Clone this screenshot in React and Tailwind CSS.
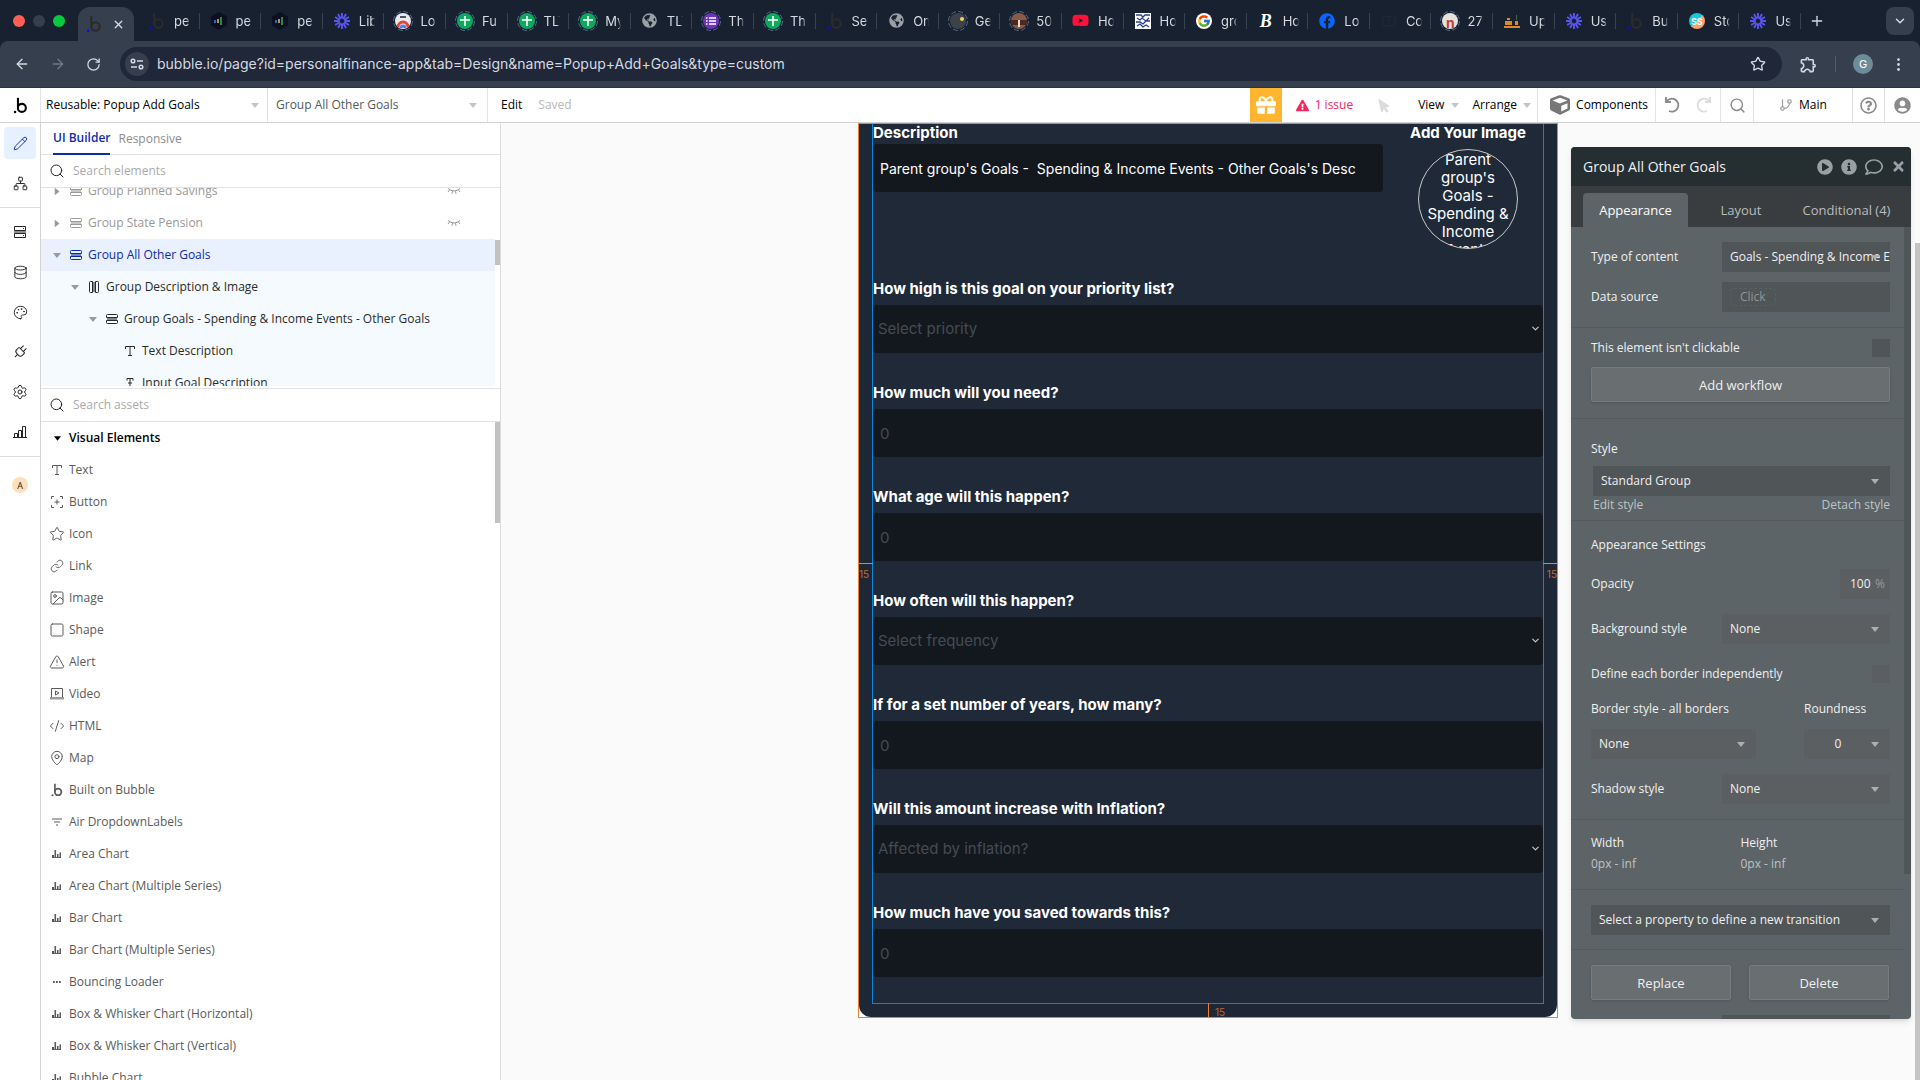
import {
  ArrowLeft, ArrowRight, RotateCw, Star, MoreVertical, Plus, X, ChevronDown, Search, Pencil,
  Network, Database, Palette, Plug, Settings, Image, Square, TriangleAlert, CodeXml, MapPin,
  Link, GitBranch,
} from 'lucide-react'
import {
  FaGift, FaExclamationTriangle, FaMousePointer, FaCube, FaPlayCircle, FaInfoCircle, FaRegComment,
  FaTimes, FaYoutube, FaFacebook, FaGlobeAmericas, FaRegQuestionCircle, FaUserCircle,
} from 'react-icons/fa'
import { MdOutlineExtension } from 'react-icons/md'
import { FcGoogle } from 'react-icons/fc'
import { clsx } from 'clsx'

/* ---------- icons ---------- */

function BubbleLogo({ className, dot = 'currentColor' }) {
  return (
    <svg viewBox="0 0 16 20" className={className} fill="none">
      <path d="M5 1v11" stroke="currentColor" strokeWidth="2.4" />
      <circle cx="9.6" cy="12.8" r="4.7" stroke="currentColor" strokeWidth="2.4" />
      <circle cx="1.6" cy="17.6" r="1.5" fill={dot} />
    </svg>
  )
}

function Burst() {
  return (
    <svg viewBox="0 0 20 20" className="size-4 text-[#5b55f0]" stroke="currentColor" strokeWidth="2.4">
      {[0, 30, 60, 90, 120, 150].map((a) => (
        <path key={a} d="M10 0v7M10 13v7" transform={`rotate(${a} 10 10)`} />
      ))}
    </svg>
  )
}

function GroupIcon({ vertical, className }) {
  return (
    <svg viewBox="0 0 12 12" className={clsx('size-3 shrink-0', vertical && 'rotate-90', className)} fill="none">
      <path d="M.5 4.5v-2a1 1 0 0 1 1-1h9a1 1 0 0 1 1 1v2zM.5 7.5v2a1 1 0 0 0 1 1h9a1 1 0 0 0 1-1v-2z" stroke="currentColor" />
      <path d="M1 5h10v2.5H1z" fill="currentColor" opacity=".55" />
    </svg>
  )
}

function ClosedEye() {
  return (
    <svg viewBox="0 0 14 8" className="h-2 w-3.5" fill="none" stroke="currentColor">
      <path d="M1 1.5q6 5 12 0M2.5 3 1 5M5.5 4.2 5 6.8M8.5 4.2 9 6.8M11.5 3 13 5" />
    </svg>
  )
}

function Bars() {
  return (
    <svg viewBox="0 0 14 14" className="size-3.5" fill="none" stroke="currentColor">
      <path d="M0 12.5h14M1.5 12V8.5h3V12M5.5 12V5.5h3V12M9.5 12V1.5h3V12" />
    </svg>
  )
}

function ChartIcon() {
  return (
    <svg viewBox="0 0 10 8" className="h-2 w-2.5" fill="currentColor">
      <path d="M0 5h2v3H0zM2.5 0h1.6v8H2.5zM5 4h1.5v4H5zM7.5 2.5H9V8H7.5z" />
      <path d="M0 7h9v1H0z" />
    </svg>
  )
}

function ButtonIcon() {
  return (
    <svg viewBox="0 0 14 14" className="size-3.5" fill="none" stroke="currentColor">
      <path d="M1.5 4V1.5H4M10 1.5h2.5V4M12.5 10v2.5H10M4 12.5H1.5V10M7 4.5v5M4.5 7h5" />
    </svg>
  )
}

function VideoIcon() {
  return (
    <svg viewBox="0 0 14 14" className="size-3.5" fill="none" stroke="currentColor">
      <path d="M1.5 10V1.5h11V10M5.5 4v4l3.5-2z" />
      <path d="M0 10h14v2.500H0z" fill="currentColor" stroke="none" opacity=".6" />
    </svg>
  )
}

function FilterIcon() {
  return (
    <svg viewBox="0 0 12 8" className="h-2 w-3" stroke="currentColor" strokeWidth="1.2">
      <path d="M1 1h10M3 4h6M5 7h2" />
    </svg>
  )
}

function DotsIcon() {
  return (
    <svg viewBox="0 0 8 2" className="h-0.5 w-2" fill="currentColor">
      <path d="M0 0h1.8v2H0zM3 0h1.8v2H3zM6 0h1.8v2H6z" />
    </svg>
  )
}

function TextIcon({ input }) {
  return (
    <svg viewBox="0 0 12 12" className="size-3 shrink-0" fill="none" stroke="currentColor">
      <path d={input ? 'M3 3.5V1.5h6v2M6 1.5v9M4.5 10.5h3M4 6h4' : 'M1.5 4V1.5h9V4M6 1.5v9M4 10.5h4'} />
    </svg>
  )
}

function ServerIcon() {
  return (
    <svg viewBox="0 0 14 14" className="size-3.5" fill="none" stroke="currentColor">
      <path d="M1.5 1.5h11v4h-11zM1.5 8.5h11v4h-11zM10 3.5h1M10 10.5h1" />
      <path d="M1 5.5h12v3H1z" fill="currentColor" stroke="none" opacity=".5" />
    </svg>
  )
}

function Caret({ className }) {
  return (
    <svg viewBox="0 0 8 5" className={clsx('pointer-events-none h-[5px] w-2', className)} fill="currentColor">
      <path d="M0 0h8L4 5z" />
    </svg>
  )
}

/* ---------- browser ---------- */

function Ringed({ className, children }) {
  return (
    <span className="relative grid size-[22px] shrink-0 place-items-center">
      <svg viewBox="0 0 22 22" className="absolute inset-0 size-full" fill="none">
        <circle cx="11" cy="11" r="9.5" stroke="#4d6a98" strokeDasharray="5 2.46" />
      </svg>
      <span className={clsx('grid size-4 place-items-center overflow-hidden rounded-full', className)}>{children}</span>
    </span>
  )
}

const Dim = () => <BubbleLogo className="h-[18px] w-4 text-[#2b2b2e]" dot="#0a0af0" />
const Globe = () => <FaGlobeAmericas size={15} className="text-[#9aa0a6]" />
const Sheet = () => (
  <Ringed className="bg-[#10a861]">
    <svg viewBox="0 0 10 10" className="size-2.5" stroke="#fff" strokeWidth="1.6"><path d="M5 0v10M0 4h10" /></svg>
  </Ringed>
)
const Spectrum = () => (
  <svg viewBox="0 0 18 18" className="size-[18px]">
    <path d="M9 0l8 4.500v9L9 18l-8-4.500v-9z" fill="#0d1020" />
    <path d="M5 8v3" stroke="#3b82f6" strokeWidth="1.500" />
    <path d="M8 7v4" stroke="#f4c542" strokeWidth="1.500" />
    <path d="M11 5v8" stroke="#3fa66b" strokeWidth="1.500" />
  </svg>
)

const browserTabs = [
  { text: 'pers', icon: <Dim /> },
  { text: 'pers', icon: <Spectrum /> },
  { text: 'pers', icon: <Spectrum /> },
  { text: 'Libr', icon: <Burst /> },
  {
    text: 'Loo',
    icon: (
      <Ringed className="bg-[#e8eaed]">
        <svg viewBox="0 0 16 16" className="size-4" fill="none" strokeWidth="3">
          <path d="M5 4h6" stroke="#4b5563" strokeWidth="2" />
          <path d="M3 14a5 5 0 0 1 10 0" stroke="#ea4335" />
          <path d="M6 15a2 2 0 0 1 4 0" stroke="#4285f4" />
        </svg>
      </Ringed>
    ),
  },
  { text: 'Full', icon: <Sheet /> },
  { text: 'TLT', icon: <Sheet /> },
  { text: 'My ', icon: <Sheet /> },
  { text: 'TLT', icon: <Globe /> },
  {
    text: 'The',
    icon: (
      <Ringed className="bg-[#6d35b5]">
        <svg viewBox="0 0 10 10" className="size-2.5" stroke="#fff" strokeWidth="1.500"><path d="M0 2h1.500M3 2h7M0 5h1.500M3 5h7M0 8h1.500M3 8h7" /></svg>
      </Ringed>
    ),
  },
  { text: 'The', icon: <Sheet /> },
  { text: 'Set', icon: <Dim /> },
  { text: 'Onl', icon: <Globe /> },
  {
    text: 'Get',
    icon: (
      <Ringed className="bg-[#3d4248]">
        <span className="mb-1 ml-2 size-1 rounded-full bg-[#f4d35e]" />
      </Ringed>
    ),
  },
  {
    text: '50 ',
    icon: (
      <Ringed className="bg-[#8a5a45]">
        <svg viewBox="0 0 16 16" className="size-4"><path d="M0 7h16v5H0z" fill="#4a2a20" /><path d="M7 7h2v7H7z" fill="#e8dfd6" /></svg>
      </Ringed>
    ),
  },
  { text: 'How', icon: <FaYoutube size={17} className="text-[#ff0f3a]" /> },
  {
    text: 'Hov',
    icon: (
      <svg viewBox="0 0 16 16" className="size-4">
        <path d="M0 0h16v16H0z" fill="#fff" />
        <path d="M1 2h5l2 2 2-2h5M2 5l3 2 2-2 4 3 3-3M1 9h4l3 2 3-3h4M2 13l3-2 3 3 3-2 3 2" fill="none" stroke="#27408b" strokeWidth="1.300" />
      </svg>
    ),
  },
  {
    text: 'gro',
    icon: <span className="grid size-4 place-items-center rounded-full bg-white"><FcGoogle size={14} /></span>,
  },
  { text: 'Hov', icon: <span className="font-['Liberation_Serif',serif] text-lg leading-4 font-bold text-white italic">B</span> },
  { text: 'Log', icon: <FaFacebook size={16} className="text-[#0866ff]" /> },
  {
    text: 'Cou',
    icon: (
      <svg viewBox="0 0 16 16" className="size-3.5" fill="none" stroke="#222e39">
        <path d="M1 2l7 1 7-1v11l-7 1-7-1zM8 3v11" />
      </svg>
    ),
  },
  { text: '27 ', icon: <Ringed className="bg-[#e6e2d8] text-sm font-bold text-[#c2403a]">n</Ringed> },
  {
    text: 'Upg',
    icon: (
      <svg viewBox="0 0 16 16" className="size-4" fill="#d98a2b">
        <path d="M0 13h16v2H0zM1 8h7v4H1zM3 5h3v2H3zM11 8h3v4h-3z" />
        <path d="M12 2h1v5h-1z" fill="#3f6b3a" />
      </svg>
    ),
  },
  { text: 'Use', icon: <Burst /> },
  { text: 'Bub', icon: <Dim /> },
  {
    text: 'Sto',
    icon: <span className="grid size-4 place-items-center rounded-full bg-linear-135 from-[#18c5d9] from-50% to-[#f7a072] to-50% text-[9px] font-bold text-white">SS</span>,
  },
  { text: 'Use', icon: <Burst /> },
]

function BrowserChrome() {
  return (
    <header className="bg-[#17212f] font-['Inter',sans-serif] text-[#d5dae1]">
      <div className="flex h-[41px] items-end">
        <div className="flex w-[78px] shrink-0 gap-2 self-center pl-[13px]">
          <span className="size-3 rounded-full bg-[#ff5f57]" />
          <span className="size-3 rounded-full bg-[#363f4d]" />
          <span className="size-3 rounded-full bg-[#08c840]" />
        </div>
        <button className="flex h-[34px] w-14 shrink-0 items-center justify-between rounded-t-xl bg-[#353f4e] pr-[9px] pl-2">
          <BubbleLogo className="h-[18px] w-4 text-[#2b2b2e]" dot="#0a0af0" />
          <X size={13} strokeWidth={2.5} />
        </button>
        <div className="ml-1 flex h-full min-w-0 flex-1 items-center">
          {browserTabs.map((tab, i) => (
            <button key={i} className="flex h-4 min-w-0 flex-1 items-center border-r border-[#39434f] pl-2">
              <span className="grid w-[22px] shrink-0 place-items-center">{tab.icon}</span>
              <span className="ml-1.5 w-4 overflow-hidden text-left text-[13px] whitespace-pre mask-r-from-80%">{tab.text}</span>
            </button>
          ))}
        </div>
        <button aria-label="New tab" className="mx-2 grid h-full place-items-center">
          <Plus size={16} strokeWidth={2} />
        </button>
        <button aria-label="Search tabs" className="mr-1.5 mb-1.5 ml-[53px] grid h-7 w-7 place-items-center rounded-lg bg-[#353f4e]">
          <ChevronDown size={14} strokeWidth={2.5} />
        </button>
      </div>
      <div className="flex h-[47px] items-center rounded-t-lg border-b border-[#2a3340] bg-[#353f4e]">
        <div className="flex w-[120px] shrink-0 items-center gap-5 pl-3.5">
          <ArrowLeft size={16} />
          <ArrowRight size={16} className="text-[#6f7886]" />
          <RotateCw size={15} />
        </div>
        <div className="flex h-[34px] flex-1 items-center rounded-full bg-[#1f2738] pr-4 pl-[5px]">
          <span className="grid size-6 place-items-center rounded-full bg-[#353f4e]">
            <svg viewBox="0 0 14 12" className="h-3 w-3.5" fill="none" stroke="currentColor" strokeWidth="1.500">
              <circle cx="3" cy="3" r="1.800" />
              <path d="M7 3h6M1 9h6" />
              <circle cx="11" cy="9" r="1.800" />
            </svg>
          </span>
          <input
            aria-label="Address"
            className="ml-2 min-w-0 flex-1 bg-transparent text-sm outline-none"
            defaultValue="bubble.io/page?id=personalfinance-app&tab=Design&name=Popup+Add+Goals&type=custom"
          />
          <Star size={16} />
        </div>
        <div className="flex w-[138px] items-center pl-[17px]">
          <MdOutlineExtension size={19} />
          <span className="ml-[17px] h-4 w-px bg-[#505a68]" />
          <span className="ml-[17px] grid size-5 place-items-center rounded-full bg-[#6d8c99] text-[11px] text-white">G</span>
          <MoreVertical size={17} className="ml-[17px]" />
        </div>
      </div>
    </header>
  )
}

/* ---------- editor top bar ---------- */

function TopBar() {
  return (
    <nav className="flex h-[35px] shrink-0 items-stretch border-b border-[#d3d3d3] bg-white text-black">
      <a href="#home" aria-label="Bubble" className="grid w-[41px] place-items-center border-r border-[#e4e4e4]">
        <BubbleLogo className="h-[17px] w-[15px]" />
      </a>
      <button className="flex w-[227px] items-center justify-between border-r border-[#e4e4e4] pr-2 pl-[5px]">
        Reusable: Popup Add Goals <Caret className="text-[#bcc8cc]" />
      </button>
      <button className="flex w-[220px] items-center justify-between border-r border-[#e4e4e4] pr-2.5 pl-2 text-[#4f5b5e]">
        Group All Other Goals <Caret className="text-[#bcc8cc]" />
      </button>
      <button className="ml-[13px]">Edit</button>
      <span className="ml-4 flex flex-1 items-center text-[#b9b9b9]">Saved</span>
      <button aria-label="Rewards" className="grid w-8 place-items-center bg-[#ffb52e] text-white">
        <FaGift size={20} />
      </button>
      <button className="ml-3.5 flex items-center gap-1.5 text-[#f2285c]">
        <FaExclamationTriangle size={13} /> 1 issue
      </button>
      <FaMousePointer size={15} className="ml-6 -rotate-12 self-center text-[#dcdcdc]" />
      <button className="ml-[26px] flex items-center gap-[7px]">View <Caret className="text-[#bcc8cc]" /></button>
      <button className="ml-[13px] flex items-center gap-1.5">Arrange <Caret className="text-[#bcc8cc]" /></button>
      <button className="ml-1.5 flex items-center gap-1.5 border-x border-[#e4e4e4] pr-[7px] pl-3">
        <FaCube size={20} className="text-[#777]" /> Components
      </button>
      <div className="flex w-[65px] items-center justify-around border-r border-[#e4e4e4]">
        <svg viewBox="0 0 18 18" className="size-[18px] text-[#8a8a8a]" fill="none" stroke="currentColor" strokeWidth="1.800">
          <path d="M3 1v5h5M3.500 5.500A6.500 6.500 0 1 1 6 15" />
        </svg>
        <svg viewBox="0 0 18 18" className="size-[18px] -scale-x-100 text-[#dcdcdc]" fill="none" stroke="currentColor" strokeWidth="1.800">
          <path d="M3 1v5h5M3.500 5.500A6.500 6.500 0 1 1 6 15" />
        </svg>
      </div>
      <button aria-label="Search" className="grid w-[33px] place-items-center border-r border-[#e4e4e4] text-[#8a8a8a]">
        <Search size={17} />
      </button>
      <button className="flex w-[99px] items-center justify-center gap-1.5 border-r border-[#e4e4e4]">
        <GitBranch size={14} className="text-[#999]" /> Main
      </button>
      <button aria-label="Help" className="grid w-8 place-items-center border-r border-[#e4e4e4] text-[#8a8a8a]">
        <FaRegQuestionCircle size={17} />
      </button>
      <button aria-label="Account" className="grid w-[35px] place-items-center text-[#8a8a8a]">
        <FaUserCircle size={17} />
      </button>
    </nav>
  )
}

/* ---------- left side ---------- */

const railIcons = [
  { name: 'Backend', icon: <ServerIcon /> },
  { name: 'Data', icon: <Database size={15} strokeWidth={1.5} /> },
  { name: 'Styles', icon: <Palette size={15} strokeWidth={1.5} /> },
  { name: 'Plugins', icon: <Plug size={16} strokeWidth={1.5} className="rotate-45" /> },
  { name: 'Settings', icon: <Settings size={16} strokeWidth={1.5} /> },
  { name: 'Logs', icon: <Bars /> },
]

function Rail() {
  return (
    <aside className="flex w-[41px] shrink-0 flex-col items-center border-r border-[#d3d3d3] bg-white text-[#222]">
      <div className="flex w-full flex-col items-center gap-2 border-b border-[#dedede] pt-1 pb-2">
        <button aria-label="Design" className="grid size-8 place-items-center rounded bg-[#e6f0ff] text-[#0b2cad]">
          <Pencil size={15} strokeWidth={1.5} />
        </button>
        <button aria-label="Workflow" className="grid size-8 place-items-center">
          <Network size={15} strokeWidth={1.5} />
        </button>
      </div>
      <div className="flex w-full flex-col items-center gap-2 border-b border-[#dedede] py-2">
        {railIcons.map((r) => (
          <button key={r.name} aria-label={r.name} className="grid size-8 place-items-center">{r.icon}</button>
        ))}
      </div>
      <span className="mt-5 grid size-4 place-items-center rounded-full bg-[#ffdfba] text-[9px]">A</span>
    </aside>
  )
}

const tree = [
  { label: 'Group Planned Savings', pad: 'pl-2', tone: 'text-[#999]', hidden: true, kind: 'group' },
  { label: 'Group State Pension', pad: 'pl-2', tone: 'text-[#999]', hidden: true, kind: 'group' },
  { label: 'Group All Other Goals', pad: 'pl-2', tone: 'bg-[#e9f1fe] text-[#0b2cad]', open: true, kind: 'group' },
  { label: 'Group Description & Image', pad: 'pl-[26px]', tone: 'bg-[#f4fafe] text-[#2a2a2a]', open: true, kind: 'column' },
  { label: 'Group Goals - Spending & Income Events - Other Goals', pad: 'pl-[44px]', tone: 'bg-[#f4fafe] text-[#2a2a2a]', open: true, kind: 'group' },
  { label: 'Text Description', pad: 'pl-[62px]', tone: 'bg-[#f4fafe] text-[#2a2a2a]', kind: 'text' },
  { label: 'Input Goal Description', pad: 'pl-[62px]', tone: 'bg-[#f4fafe] text-[#2a2a2a]', kind: 'input' },
]

function TreeRow({ row }) {
  return (
    <li>
      <button className={clsx('flex h-8 w-full items-center text-left', row.pad, row.tone)}>
        <span className="mr-[5px] grid w-4 place-items-center text-[#9a9a9a]">
          {(row.open || row.hidden) && <Caret className={clsx(row.hidden && '-rotate-90')} />}
        </span>
        {row.kind === 'group' && <GroupIcon />}
        {row.kind === 'column' && <GroupIcon vertical />}
        {row.kind === 'text' && <TextIcon />}
        {row.kind === 'input' && <TextIcon input />}
        <span className="ml-1.5 flex-1">{row.label}</span>
        {row.hidden && <span className="mr-[34px]"><ClosedEye /></span>}
      </button>
    </li>
  )
}

const assets = [
  { label: 'Text', icon: <TextIcon /> },
  { label: 'Button', icon: <ButtonIcon /> },
  { label: 'Icon', icon: <Star size={16} strokeWidth={1.5} /> },
  { label: 'Link', icon: <Link size={14} strokeWidth={1.5} /> },
  { label: 'Image', icon: <Image size={16} strokeWidth={1.5} /> },
  { label: 'Shape', icon: <Square size={16} strokeWidth={1.5} /> },
  { label: 'Alert', icon: <TriangleAlert size={16} strokeWidth={1.5} /> },
  { label: 'Video', icon: <VideoIcon /> },
  { label: 'HTML', icon: <CodeXml size={16} strokeWidth={1.5} /> },
  { label: 'Map', icon: <MapPin size={16} strokeWidth={1.5} /> },
  { label: 'Built on Bubble', icon: <BubbleLogo className="h-3.5 w-3" /> },
  { label: 'Air DropdownLabels', icon: <FilterIcon /> },
  { label: 'Area Chart', icon: <ChartIcon /> },
  { label: 'Area Chart (Multiple Series)', icon: <ChartIcon /> },
  { label: 'Bar Chart', icon: <ChartIcon /> },
  { label: 'Bar Chart (Multiple Series)', icon: <ChartIcon /> },
  { label: 'Bouncing Loader', icon: <DotsIcon /> },
  { label: 'Box & Whisker Chart (Horizontal)', icon: <ChartIcon /> },
  { label: 'Box & Whisker Chart (Vertical)', icon: <ChartIcon /> },
  { label: 'Bubble Chart', icon: <ChartIcon /> },
]

function SearchBox({ placeholder }) {
  return (
    <label className="flex h-[33px] shrink-0 items-center gap-2 border-b border-[#e2e2e2] pl-2 text-[#222]">
      <Search size={16} strokeWidth={1.5} />
      <input aria-label={placeholder} placeholder={placeholder} className="flex-1 outline-none placeholder:text-[#aaa]" />
    </label>
  )
}

function ElementsPanel() {
  return (
    <section className="flex min-h-0 w-[460px] shrink-0 flex-col border-r border-[#dcdcdc] bg-white">
      <div className="flex h-8 shrink-0 gap-2 border-b border-[#e2e2e2] pl-3">
        <button className="-mb-px border-b-2 border-[#0b2cad] font-semibold text-[#0b2cad]">UI Builder</button>
        <button className="text-[#8c8c8c]">Responsive</button>
      </div>
      <SearchBox placeholder="Search elements" />
      <div className="mb-0.5 flex h-[198px] shrink-0 overflow-hidden">
        <ul className="-mt-[13px] flex-1">
          {tree.map((row) => <TreeRow key={row.label} row={row} />)}
        </ul>
        <span className="mt-[52px] h-[25px] w-[5px] bg-[#c2c2c2]" />
      </div>
      <div className="shrink-0 border-t border-[#e2e2e2]">
        <SearchBox placeholder="Search assets" />
      </div>
      <div className="flex min-h-0 flex-1 overflow-hidden">
        <div className="flex-1">
          <h2 className="flex h-8 items-center gap-1 pl-2 font-semibold text-black">
            <span className="grid w-4 place-items-center"><Caret className="h-1 w-[7px]" /></span>
            Visual Elements
          </h2>
          <ul>
            {assets.map((a) => (
              <li key={a.label}>
                <button className="flex h-8 w-full items-center gap-1 pl-2 text-left text-[#5a5a5a]">
                  <span className="grid w-4 place-items-center">{a.icon}</span>
                  {a.label}
                </button>
              </li>
            ))}
          </ul>
        </div>
        <span className="h-[101px] w-[5px] bg-[#c2c2c2]" />
      </div>
    </section>
  )
}

/* ---------- popup on the canvas ---------- */

const fields = [
  { id: 'priority', label: 'How high is this goal on your priority list?', select: 'Select priority' },
  { id: 'need', label: 'How much will you need?' },
  { id: 'age', label: 'What age will this happen?' },
  { id: 'often', label: 'How often will this happen?', select: 'Select frequency' },
  { id: 'years', label: 'If for a set number of years, how many?' },
  { id: 'inflation', label: 'Will this amount increase with Inflation?', select: 'Affected by inflation?' },
  { id: 'saved', label: 'How much have you saved towards this?' },
]

function Field({ field }) {
  return (
    <div>
      <label htmlFor={field.id} className="mb-1.5 block h-5 leading-5 font-bold">{field.label}</label>
      {field.select ? (
        <div className="relative">
          <select id={field.id} className="block h-12 w-full appearance-none rounded bg-[#13181f] px-[5px] text-[#454b54]">
            <option>{field.select}</option>
          </select>
          <ChevronDown size={11} strokeWidth={2.5} className="pointer-events-none absolute top-[18px] right-0.5 text-[#c8ccd2]" />
        </div>
      ) : (
        <input id={field.id} placeholder="0" className="block h-12 w-full rounded bg-[#13181f] px-[7px] placeholder:text-[#454b54]" />
      )}
    </div>
  )
}

function PopupPreview() {
  return (
    <div className="relative w-[700px] shrink-0 self-start border border-[#f08030] bg-white font-['Inter',sans-serif] text-[15px] text-white">
      <div className="rounded-b-xl bg-[#1e2735] px-[13px] pb-[13px]">
        <form className="flex flex-col gap-[30px] border border-t-0 border-[#0a84e0] bg-[#202938] pb-[26px]">
          <div className="flex gap-2.5">
            <div className="min-w-0 flex-1">
              <label htmlFor="description" className="block h-5 leading-[18px] font-bold">Description</label>
              <input
                id="description"
                className="block h-12 w-full rounded bg-[#13181f] px-[7px] text-sm"
                defaultValue="Parent group's Goals -  Spending & Income Events - Other Goals's Desc"
              />
            </div>
            <div className="flex w-[150px] flex-col items-center">
              <span className="h-5 leading-[18px] font-bold">Add Your Image</span>
              <div className="mt-[5px] size-[100px] overflow-hidden rounded-full border border-[#c9c9c9] px-1 pt-px text-center leading-[18px]">
                Parent group's Goals - Spending &amp; Income Events
              </div>
            </div>
          </div>
          {fields.map((f) => <Field key={f.id} field={f} />)}
        </form>
      </div>

      {/* Padding guides */}
      <div className="absolute top-[439px] left-0 w-3.5 border-t border-[#f08030] pt-px text-[10px] text-[#c06a30]">15</div>
      <div className="absolute top-[439px] right-0 w-3.5 border-t border-[#f08030] pt-px text-right text-[10px] text-[#c06a30]">15</div>
      <div className="absolute bottom-0 left-1/2 h-3.5 border-l border-[#f08030] pl-1.5 text-[10px] leading-[18px] text-[#c06a30]">15</div>
    </div>
  )
}

/* ---------- property editor ---------- */

function PanelSelect({ id, label, value, className, light, center }) {
  return (
    <div className={clsx('relative', className)}>
      <select
        id={id}
        aria-label={label}
        className={clsx(
          'block h-[30px] w-full appearance-none overflow-hidden pl-2 text-clip',
          light ? 'bg-[#5b5f62]' : 'bg-[#505558]',
          center && 'pr-[26px] pl-0 text-center',
        )}
      >
        <option>{value}</option>
      </select>
      <Caret className="absolute top-[13px] right-[11px] text-[#a9b0b3]" />
    </div>
  )
}

function PanelButton({ className, children }) {
  return (
    <button className={clsx('block h-[35px] rounded-xs border border-[#757b7e] bg-[#696e71] text-[13px] shadow-sm', className)}>
      {children}
    </button>
  )
}

const line = 'border-b border-[#545a5d] pr-3.5 pl-5'

function PropertyEditor() {
  return (
    <section className="mt-6 flex h-[872px] w-[340px] shrink-0 flex-col overflow-hidden rounded bg-[#5d6467] text-[#f0f0f0] shadow-md">
      <div className="flex h-[39px] shrink-0 items-center bg-[#252e31] pr-[5px] pl-3">
        <h2 className="flex-1 text-sm">Group All Other Goals</h2>
        <div className="flex items-center gap-2 text-[#98a0a3]">
          <FaPlayCircle size={16} />
          <FaInfoCircle size={16} />
          <FaRegComment size={18} />
          <FaTimes size={15} />
        </div>
      </div>
      <div className="flex h-[41px] shrink-0 items-end bg-[#393d40] pr-3 pl-3 text-[13px] text-[#b9bcbd]">
        <button className="h-[34px] w-[105px] rounded-t bg-[#5d6467] text-white">Appearance</button>
        <button className="h-[34px] w-[106px]">Layout</button>
        <button className="h-[34px] flex-1">Conditional (4)</button>
      </div>
      <div className="flex min-h-0 flex-1 overflow-hidden">
        <div className="w-[333px]">
          <div className={clsx(line, 'flex flex-col gap-2.5 py-[15px]')}>
            <div className="flex items-center justify-between">
              <label htmlFor="ctype">Type of content</label>
              <PanelSelect id="ctype" value="Goals - Spending & Income Events" className="w-[168px]" />
            </div>
            <div className="flex h-[30px] items-center justify-between">
              <span>Data source</span>
              <button className="h-[30px] w-[168px] bg-[#505558] px-2 text-left text-[#8f9597]">
                <span className="inline-block rounded-sm border border-dashed border-[#595f62] px-[9px] leading-4">Click</span>
              </button>
            </div>
          </div>

          <div className={clsx(line, 'pt-[11px] pb-4')}>
            <label className="flex items-center justify-between">
              This element isn't clickable
              <input type="checkbox" className="size-[18px] appearance-none bg-[#505558]" />
            </label>
            <PanelButton className="mt-2.5 w-full">Add workflow</PanelButton>
          </div>

          <div className={clsx(line, 'pt-[21px] pb-1.5')}>
            <label htmlFor="style" className="block">Style</label>
            <div className="mt-2 ml-0.5">
              <PanelSelect id="style" value="Standard Group" />
              <div className="flex justify-between text-[#bfc3c4]">
                <button>Edit style</button>
                <button>Detach style</button>
              </div>
            </div>
          </div>

          <div className={clsx(line, 'py-[15px]')}>
            <h3>Appearance Settings</h3>
            <div className="mt-[15px] flex items-center justify-between">
              <label htmlFor="opacity">Opacity</label>
              <span className="flex h-[30px] w-[50px] items-center gap-1 bg-[#5b5f62] pl-2.5">
                <input id="opacity" defaultValue="100" className="w-[21px] bg-transparent" />
                <span className="text-[#979c9e]">%</span>
              </span>
            </div>
            <div className="mt-[15px] flex items-center justify-between">
              <label htmlFor="bgstyle">Background style</label>
              <PanelSelect id="bgstyle" value="None" light className="w-[168px]" />
            </div>
            <label className="mt-[15px] flex h-[30px] items-center justify-between">
              Define each border independently
              <input type="checkbox" className="size-[18px] appearance-none bg-[#5b5f62]" />
            </label>
            <div className="mt-[11px] flex justify-between">
              <div className="w-[165px]">
                <label htmlFor="border">Border style - all borders</label>
                <PanelSelect id="border" value="None" light className="mt-[11px]" />
              </div>
              <div className="w-[86px]">
                <label htmlFor="round">Roundness</label>
                <PanelSelect id="round" value="0" light center className="mt-[11px]" />
              </div>
            </div>
            <div className="mt-[15px] flex items-center justify-between">
              <label htmlFor="shadow">Shadow style</label>
              <PanelSelect id="shadow" value="None" light className="w-[168px]" />
            </div>
          </div>

          <div className={clsx(line, 'grid grid-cols-2 pt-3.5 pb-4')}>
            <div>
              <div>Width</div>
              <div className="mt-[3px] text-[#bfc3c4]">0px - inf</div>
            </div>
            <div>
              <div>Height</div>
              <div className="mt-[3px] text-[#bfc3c4]">0px - inf</div>
            </div>
          </div>

          <div className={clsx(line, 'pt-[15px] pb-3.5')}>
            <PanelSelect label="Transition" value="Select a property to define a new transition" />
          </div>

          <div className="flex justify-between pt-[15px] pr-[15px] pl-5">
            <PanelButton className="w-[140px]">Replace</PanelButton>
            <PanelButton className="w-[140px]">Delete</PanelButton>
          </div>
          <div className="mt-[15px] mr-3.5 ml-auto h-[30px] w-[168px] bg-[#505558]" />
        </div>
        <span className="h-[647px] w-[7px] bg-[#505558]" />
      </div>
    </section>
  )
}

export default function App() {
  return (
    <div className="flex h-screen flex-col overflow-hidden bg-[#fafafa] font-['Open_Sans',sans-serif] text-xs leading-[18px]">
      <BrowserChrome />
      <TopBar />
      <div className="flex min-h-0 flex-1">
        <Rail />
        <ElementsPanel />
        <main className="flex min-w-0 flex-1 justify-end gap-[13px]">
          <PopupPreview />
          <div className="flex gap-1">
            <PropertyEditor />
            <span className="mt-[120px] w-[5px] bg-[#c4c4c4]" />
          </div>
        </main>
      </div>
    </div>
  )
}
